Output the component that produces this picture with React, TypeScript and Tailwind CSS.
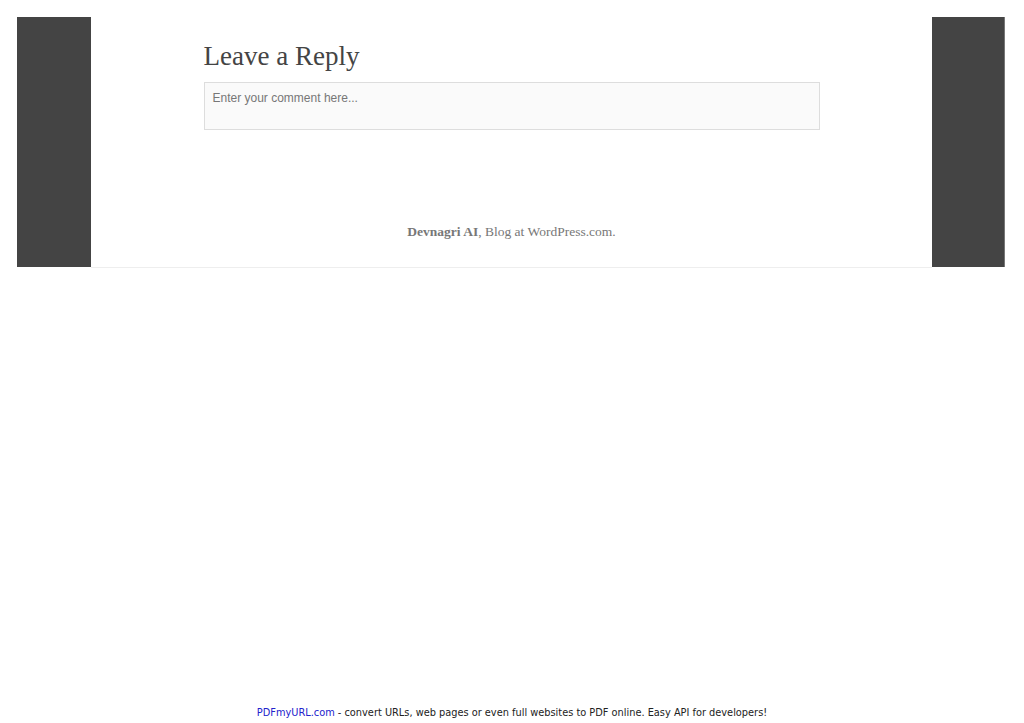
import React from "react";

const serif = { fontFamily: '"Liberation Serif", "DejaVu Serif", serif' };

const App = () => {
  return (
    <div className="min-h-[723px] bg-white flex flex-col">
      {/* Page frame */}
      <div className="pt-[17px] pl-[17px] pr-[19px]">
        <div className="flex h-[251px]">
          <div className="w-[74px] h-[250px] bg-[#444444]" />
          <div className="flex-1 border-b border-[#eeeeee] flex flex-col items-center">
            <div className="w-[616px] pt-[23px]">
              <h3
                className="text-[27px] leading-[32px] text-[#444444] font-normal"
                style={serif}
              >
                Leave a Reply
              </h3>
              <div className="mt-[10px] h-[48px] border border-[#dddddd] bg-[#fafafa] px-[8px] pt-[8px]">
                <p
                  className="text-[12px] leading-[14px] text-[#777777]"
                  style={{ fontFamily: '"Liberation Sans", Arial, sans-serif' }}
                >
                  Enter your comment here...
                </p>
              </div>
            </div>
            <p
              className="mt-[94px] text-[13.5px] leading-[16px] text-[#777777]"
              style={serif}
            >
              <span className="font-bold">Devnagri AI</span>, Blog at WordPress.com.
            </p>
          </div>
          <div className="w-[73px] h-[250px] bg-[#444444] border-r border-[#777777]" />
        </div>
      </div>

      {/* PDF banner */}
      <div
        className="mt-auto pb-[4px] text-center text-[9.8px] leading-[12px] text-[#222222]"
        style={{ fontFamily: '"DejaVu Sans", Verdana, sans-serif' }}
      >
        <span className="text-[#2222cc]">PDFmyURL.com</span> - convert URLs, web pages or even full websites to PDF online. Easy API for developers!
      </div>
    </div>
  );
};

export default App;
